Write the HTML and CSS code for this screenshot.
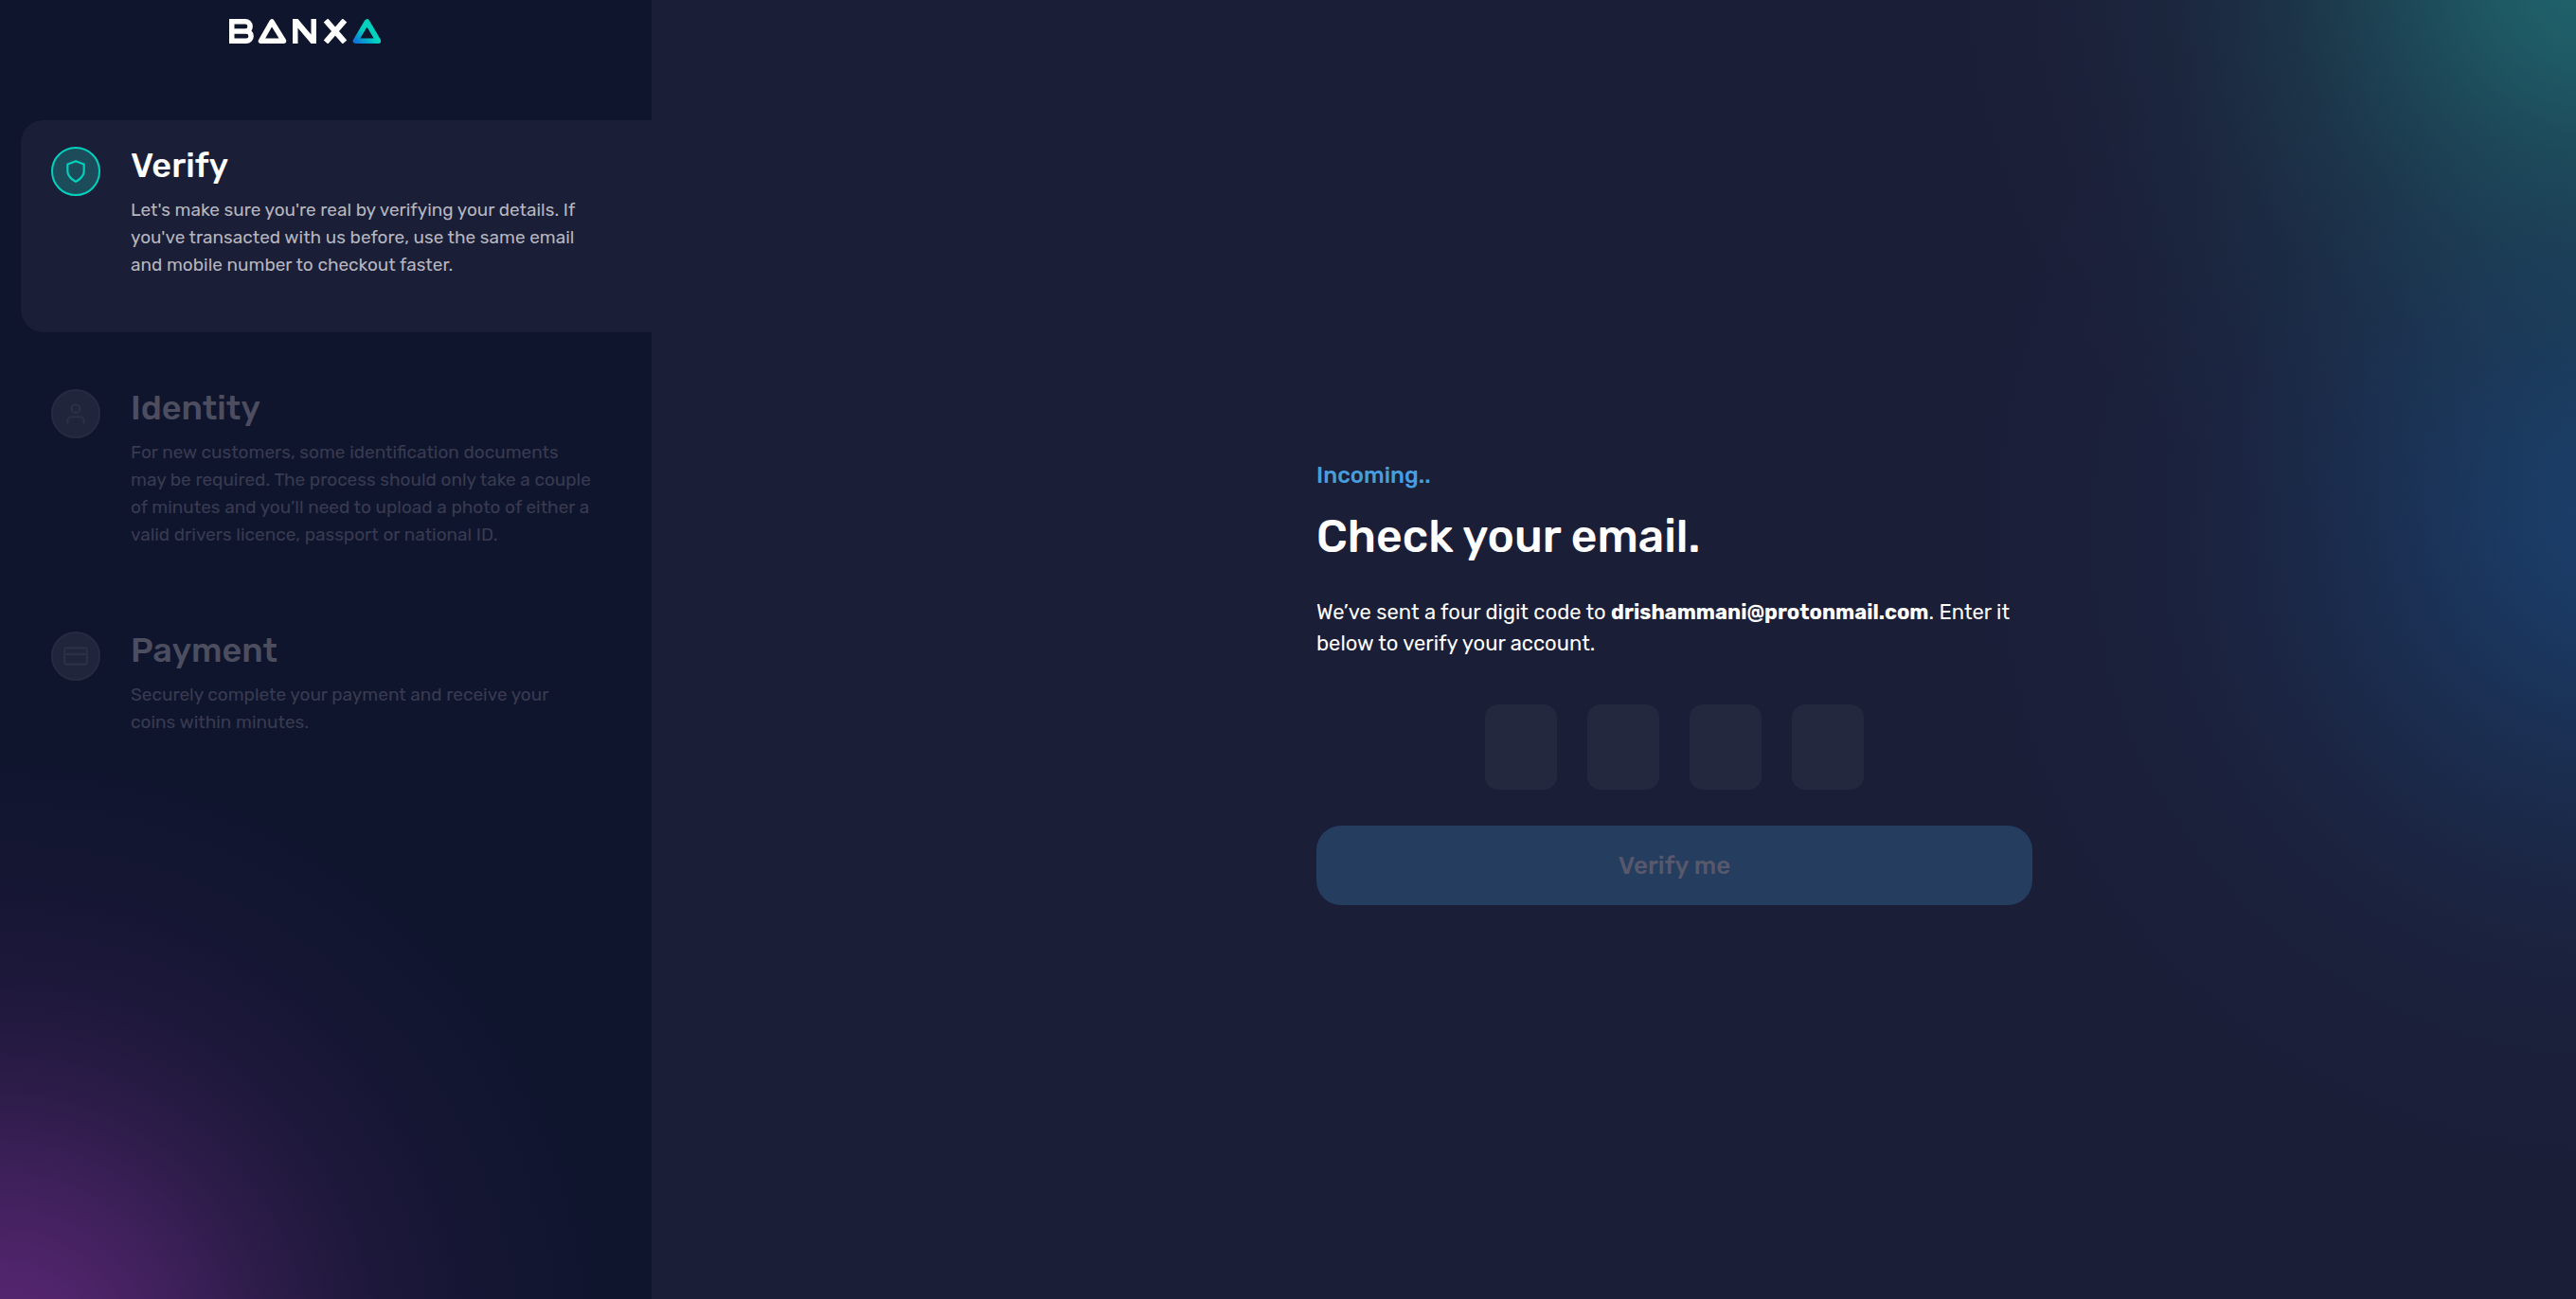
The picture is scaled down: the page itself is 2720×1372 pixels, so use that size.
FILE: index.html
```
<!DOCTYPE html>
<html lang="en">
<head>
<meta charset="utf-8">
<meta name="viewport" content="width=device-width, initial-scale=1">
<title>Banxa – Check your email</title>
<link rel="stylesheet" href="styles.css">
</head>
<body>
<div class="layout">
  <aside class="sidebar">
    <svg class="logo" viewBox="0 0 160 26" role="img" aria-label="Banxa">
      <defs>
        <linearGradient id="tri" x1="0" y1="1" x2="0.45" y2="0.55">
          <stop offset="0" stop-color="#0a78dc"/>
          <stop offset="1" stop-color="#00d2be"/>
        </linearGradient>
      </defs>
      <g fill="none" stroke="#fff" stroke-width="5.500">
        <path d="M2.750 2.750H17a5 5 0 0 1 0 10.250H2.750M18 13a5 5 0 0 1 0 10.250H2.750V0"/>
        <path d="M45 3L33.500 23.250H57.500Z" stroke-linejoin="round"/>
        <path d="M102 1.500L122 24.500M122 1.500L102 24.500" stroke-width="6"/>
      </g>
      <path d="M67 26V0H72.500L86.500 16.500V0H92V26H86.500L72.500 9.500V26Z" fill="#fff"/>
      <path d="M145.500 3L133.500 23.250H157.500Z" fill="none" stroke="url(#tri)" stroke-width="5.500" stroke-linejoin="round"/>
    </svg>
    <ol class="steps">
      <li class="step step-active">
        <span class="step-icon">
          <svg viewBox="0 0 24 24" aria-hidden="true"><path d="M12 22s8-4 8-10V5l-8-3-8 3v7c0 6 8 10 8 10z"/></svg>
        </span>
        <div class="step-body">
          <h2>Verify</h2>
          <p>Let's make sure you're real by verifying your details. If you've transacted with us before, use the same email and mobile number to checkout faster.</p>
        </div>
      </li>
      <li class="step">
        <span class="step-icon">
          <svg viewBox="0 0 24 24" aria-hidden="true"><path d="M20 21v-2a4 4 0 0 0-4-4H8a4 4 0 0 0-4 4v2"/><circle cx="12" cy="7" r="4"/></svg>
        </span>
        <div class="step-body">
          <h2>Identity</h2>
          <p>For new customers, some identification documents may be required. The process should only take a couple of minutes and you’ll need to upload a photo of either a valid drivers licence, passport or national ID.</p>
        </div>
      </li>
      <li class="step">
        <span class="step-icon">
          <svg viewBox="0 0 24 24" aria-hidden="true"><rect x="1" y="4" width="22" height="16" rx="2"/><path d="M1 10h22"/></svg>
        </span>
        <div class="step-body">
          <h2>Payment</h2>
          <p>Securely complete your payment and receive your coins within minutes.</p>
        </div>
      </li>
    </ol>
  </aside>
  <main class="content">
    <form class="verify">
      <p class="eyebrow">Incoming..</p>
      <h1>Check your email.</h1>
      <p class="lead">We’ve sent a four digit code to <strong>drishammani@protonmail.com</strong>. Enter it below to verify your account.</p>
      <div class="code">
        <input type="text" inputmode="numeric" maxlength="1" aria-label="Digit 1">
        <input type="text" inputmode="numeric" maxlength="1" aria-label="Digit 2">
        <input type="text" inputmode="numeric" maxlength="1" aria-label="Digit 3">
        <input type="text" inputmode="numeric" maxlength="1" aria-label="Digit 4">
      </div>
      <button class="submit" type="submit" disabled>Verify me</button>
    </form>
  </main>
</div>
</body>
</html>
```
FILE: styles.css
```
* {
  box-sizing: border-box;
}

body {
  margin: 0;
  font-family: Rubik, Inter, sans-serif;
  color: #fff;
  background: #1b1e37;
}

h1, h2, p, ol {
  margin: 0;
  padding: 0;
}

.layout {
  display: grid;
  grid-template-columns: 688px 1fr;
  min-height: 100vh;
}

.sidebar {
  padding: 20px 0 32px 22px;
  background:
    radial-gradient(circle 640px at 0 105%,
      rgba(104, 42, 130, .84) 0%,
      rgba(104, 42, 130, .72) 16%,
      rgba(104, 42, 130, .52) 31%,
      rgba(104, 42, 130, .3) 47%,
      rgba(104, 42, 130, .15) 63%,
      rgba(104, 42, 130, .05) 81%,
      rgba(104, 42, 130, 0) 100%),
    #10152e;
}

.logo {
  display: block;
  width: 160px;
  height: 26px;
  margin: 0 0 81px 220px;
}

.steps {
  display: grid;
  gap: 32px;
  list-style: none;
}

.step {
  display: flex;
  gap: 32px;
  min-height: 224px;
  padding: 28px 60px 28px 32px;
  border-radius: 24px 0 0 24px;
}

.step-icon {
  display: flex;
  flex: none;
  align-items: center;
  justify-content: center;
  width: 52px;
  height: 52px;
  border: 2px solid #262b41;
  border-radius: 50%;
  background: #20253b;
}

.step-icon svg {
  width: 26px;
  height: 26px;
  fill: none;
  stroke: #2c3047;
  stroke-width: 2;
  stroke-linecap: round;
  stroke-linejoin: round;
}

.step h2 {
  margin-bottom: 12px;
  font-size: 36px;
  font-weight: 500;
  line-height: 40px;
  color: #4c4e60;
}

.step p {
  font-size: 19px;
  line-height: 29px;
  color: #383b50;
}

.step-active {
  background: #1b1e37;
}

.step-active .step-icon {
  border-color: #00d2be;
  background: #1c4c5a;
}

.step-active .step-icon svg {
  stroke: #00d2be;
}

.step-active h2 {
  color: #fff;
}

.step-active p {
  color: #b5b6bf;
}

.content {
  display: flex;
  align-items: center;
  justify-content: center;
  padding: 72px 0 0 128px;
  background:
    radial-gradient(circle 680px at 101% -3%,
      rgba(32, 122, 124, .78) 0%,
      rgba(32, 122, 124, .64) 16%,
      rgba(32, 122, 124, .42) 32%,
      rgba(32, 122, 124, .23) 48%,
      rgba(32, 122, 124, .1) 65%,
      rgba(32, 122, 124, .03) 83%,
      rgba(32, 122, 124, 0) 100%),
    radial-gradient(circle 680px at 102% 41%,
      rgba(26, 84, 142, .6) 0%,
      rgba(26, 84, 142, .48) 17%,
      rgba(26, 84, 142, .32) 34%,
      rgba(26, 84, 142, .18) 50%,
      rgba(26, 84, 142, .08) 66%,
      rgba(26, 84, 142, .03) 83%,
      rgba(26, 84, 142, 0) 100%),
    #1b1e37;
}

.verify {
  width: 100%;
  max-width: 756px;
}

.eyebrow {
  margin-bottom: 24px;
  font-size: 24px;
  font-weight: 500;
  line-height: 28px;
  color: #469edf;
}

h1 {
  margin-bottom: 36px;
  font-size: 48px;
  font-weight: 500;
  line-height: 54px;
}

.lead {
  margin-bottom: 48px;
  font-size: 22px;
  line-height: 33px;
}

.code {
  display: flex;
  justify-content: center;
  gap: 32px;
  margin-bottom: 38px;
}

.code input {
  width: 76px;
  height: 90px;
  padding: 0;
  border: 0;
  border-radius: 14px;
  background: #24283e;
  color: #fff;
  font: 500 36px Rubik, Inter, sans-serif;
  text-align: center;
}

.submit {
  display: block;
  width: 100%;
  height: 84px;
  border: 0;
  border-radius: 26px;
  background: #253d5f;
  color: #57586b;
  font: 500 26px Rubik, Inter, sans-serif;
}
```
